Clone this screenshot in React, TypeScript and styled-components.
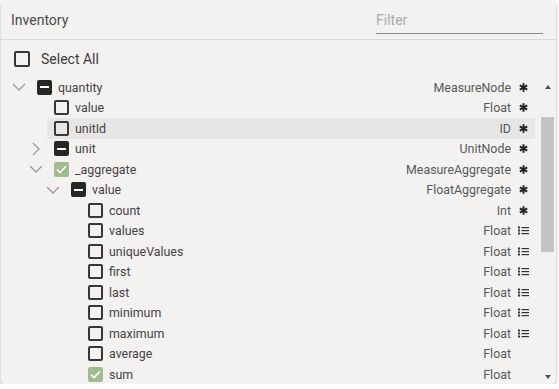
import React, { FC } from 'react';
import styled, { createGlobalStyle } from 'styled-components';

const GlobalStyle = createGlobalStyle`
  html, body {
    margin: 0;
    padding: 0;
    background: #ffffff;
    font-family: Roboto, "Noto Sans", sans-serif;
  }
`;

const Panel = styled.div`
  margin: 1px 0 0 1px;
  width: 555px;
  height: 383px;
  background: #f3f2f1;
  border-radius: 4px;
  box-shadow: 0 1px 3px rgba(0, 0, 0, 0.35);
  display: flex;
  flex-direction: column;
  overflow: hidden;
`;

const Header = styled.div`
  height: 38px;
  flex: none;
  display: flex;
  align-items: center;
  justify-content: space-between;
  padding: 0 13px 0 10px;
  border-bottom: 1px solid #d9d8d7;
`;

const Title = styled.div`
  font-size: 14px;
  color: #4a4a4a;
`;

const FilterInput = styled.input`
  align-self: flex-end;
  margin-bottom: 5px;
  width: 167px;
  height: 24px;
  box-sizing: border-box;
  padding: 0 0 3px 0;
  border: none;
  border-bottom: 1px solid #8c8c8c;
  background: transparent;
  font-family: Roboto, sans-serif;
  font-size: 14px;
  color: #333;
  outline: none;

  &::placeholder {
    color: #ababab;
  }
`;

const SelectAllRow = styled.label`
  height: 37px;
  flex: none;
  display: flex;
  align-items: center;
  gap: 11px;
  padding-left: 13px;
  font-size: 14px;
  color: #3c3c3c;
`;

const Body = styled.div`
  flex: 1;
  min-height: 0;
  display: flex;
`;

const TreeList = styled.div`
  flex: 1;
  overflow: hidden;
  padding-right: 4px;
`;

const Row = styled.div<{ $level: number }>`
  height: 20.5px;
  display: flex;
  align-items: center;
  padding-left: ${(p) => 7 + p.$level * 17}px;
`;

const Toggle = styled.div`
  width: 22px;
  height: 20px;
  flex: none;
  display: flex;
  align-items: center;
  justify-content: center;
`;

const Node = styled.div<{ $active?: boolean }>`
  flex: 1;
  height: 100%;
  display: flex;
  align-items: center;
  padding: 0 6px 0 7px;
  background: ${(p) => (p.$active ? '#e7e6e5' : 'transparent')};
`;

const Box = styled.span<{ $state: 'off' | 'on' | 'mixed'; $size?: number }>`
  width: ${(p) => p.$size ?? 15}px;
  height: ${(p) => p.$size ?? 15}px;
  box-sizing: border-box;
  flex: none;
  border-radius: 2px;
  display: flex;
  align-items: center;
  justify-content: center;
  border: 2px solid
    ${(p) => (p.$state === 'off' ? '#383838' : p.$state === 'on' ? '#9fbc8c' : '#262626')};
  background: ${(p) =>
    p.$state === 'off' ? 'transparent' : p.$state === 'on' ? '#9fbc8c' : '#262626'};
`;

const Label = styled.span`
  margin-left: 6px;
  font-size: 12.4px;
  color: #444;
  white-space: nowrap;
`;

const TypeName = styled.span`
  margin-left: auto;
  font-size: 12.4px;
  color: #595959;
  white-space: nowrap;
`;

const IconSlot = styled.span`
  width: 12px;
  margin-left: 6px;
  flex: none;
  display: flex;
  align-items: center;
  justify-content: center;
`;

const ScrollBar = styled.div`
  width: 17px;
  flex: none;
  display: flex;
  flex-direction: column;
  align-items: center;
`;

const Arrow = styled.div<{ $dir: 'up' | 'down' }>`
  height: 17px;
  flex: none;
  display: flex;
  align-items: center;
  justify-content: center;

  &::after {
    content: '';
    border-left: 3.5px solid transparent;
    border-right: 3.5px solid transparent;
    ${(p) =>
      p.$dir === 'up'
        ? 'border-bottom: 4px solid #505050; margin-top: 3px;'
        : 'border-top: 4px solid #505050; margin-top: 3px;'}
  }
`;

const Track = styled.div`
  flex: 1;
  width: 100%;
  display: flex;
  justify-content: center;
`;

const Thumb = styled.div`
  margin-top: 23px;
  width: 13px;
  height: 135px;
  background: #c3c3c3;
`;

type CheckState = 'off' | 'on' | 'mixed';

type TreeItem = {
  name: string;
  type: string;
  level: number;
  check: CheckState;
  toggle?: 'open' | 'closed';
  icon?: 'required' | 'list';
  active?: boolean;
};

const items: TreeItem[] = [
  { name: 'quantity', type: 'MeasureNode', level: 0, check: 'mixed', toggle: 'open', icon: 'required' },
  { name: 'value', type: 'Float', level: 1, check: 'off', icon: 'required' },
  { name: 'unitId', type: 'ID', level: 1, check: 'off', icon: 'required', active: true },
  { name: 'unit', type: 'UnitNode', level: 1, check: 'mixed', toggle: 'closed', icon: 'required' },
  { name: '_aggregate', type: 'MeasureAggregate', level: 1, check: 'on', toggle: 'open', icon: 'required' },
  { name: 'value', type: 'FloatAggregate', level: 2, check: 'mixed', toggle: 'open', icon: 'required' },
  { name: 'count', type: 'Int', level: 3, check: 'off', icon: 'required' },
  { name: 'values', type: 'Float', level: 3, check: 'off', icon: 'list' },
  { name: 'uniqueValues', type: 'Float', level: 3, check: 'off', icon: 'list' },
  { name: 'first', type: 'Float', level: 3, check: 'off', icon: 'list' },
  { name: 'last', type: 'Float', level: 3, check: 'off', icon: 'list' },
  { name: 'minimum', type: 'Float', level: 3, check: 'off', icon: 'list' },
  { name: 'maximum', type: 'Float', level: 3, check: 'off', icon: 'list' },
  { name: 'average', type: 'Float', level: 3, check: 'off' },
  { name: 'sum', type: 'Float', level: 3, check: 'on' },
];

const Chevron: FC<{ open: boolean }> = ({ open }) =>
  open ? (
    <svg width="14" height="8" viewBox="0 0 14 8">
      <path d="M1 1 L7 7 L13 1" fill="none" stroke="#9a9a9a" strokeWidth="1.3" />
    </svg>
  ) : (
    <svg width="8" height="14" viewBox="0 0 8 14">
      <path d="M1 1 L7 7 L1 13" fill="none" stroke="#9a9a9a" strokeWidth="1.3" />
    </svg>
  );

const RequiredIcon: FC = () => (
  <svg width="9" height="9" viewBox="0 0 10 10">
    <g stroke="#222" strokeWidth="2.2" strokeLinecap="butt">
      <line x1="5" y1="0.3" x2="5" y2="9.7" />
      <line x1="0.9" y1="2.65" x2="9.1" y2="7.35" />
      <line x1="0.9" y1="7.35" x2="9.1" y2="2.65" />
    </g>
  </svg>
);

const ListIcon: FC = () => (
  <svg width="11" height="9" viewBox="0 0 11 9">
    <g fill="#333">
      <rect x="0" y="0.5" width="2" height="2" />
      <rect x="0" y="3.5" width="2" height="2" />
      <rect x="0" y="6.5" width="2" height="2" />
      <rect x="3.5" y="1" width="7.5" height="1.2" />
      <rect x="3.5" y="4" width="7.5" height="1.2" />
      <rect x="3.5" y="7" width="7.5" height="1.2" />
    </g>
  </svg>
);

const CheckMark: FC = () => (
  <svg width="11" height="9" viewBox="0 0 11 9">
    <path d="M1 4.5 L4 7.5 L10 1.2" fill="none" stroke="#fff" strokeWidth="1.6" />
  </svg>
);

const DashMark: FC = () => (
  <svg width="9" height="2" viewBox="0 0 9 2">
    <rect x="0" y="0" width="9" height="2" fill="#fff" />
  </svg>
);

const CheckBox: FC<{ state: CheckState; size?: number }> = ({ state, size }) => (
  <Box $state={state} $size={size}>
    {state === 'on' && <CheckMark />}
    {state === 'mixed' && <DashMark />}
  </Box>
);

const TreeRow: FC<{ item: TreeItem }> = ({ item }) => (
  <Row $level={item.level}>
    <Toggle>{item.toggle && <Chevron open={item.toggle === 'open'} />}</Toggle>
    <Node $active={item.active}>
      <CheckBox state={item.check} />
      <Label>{item.name}</Label>
      <TypeName>{item.type}</TypeName>
      <IconSlot>
        {item.icon === 'required' && <RequiredIcon />}
        {item.icon === 'list' && <ListIcon />}
      </IconSlot>
    </Node>
  </Row>
);

const App: FC = () => {
  return (
    <>
      <GlobalStyle />
      <Panel>
        <Header>
          <Title>Inventory</Title>
          <FilterInput placeholder="Filter" />
        </Header>
        <SelectAllRow>
          <CheckBox state="off" size={16} />
          Select All
        </SelectAllRow>
        <Body>
          <TreeList>
            {items.map((item, index) => (
              <TreeRow key={index} item={item} />
            ))}
          </TreeList>
          <ScrollBar>
            <Arrow $dir="up" />
            <Track>
              <Thumb />
            </Track>
            <Arrow $dir="down" />
          </ScrollBar>
        </Body>
      </Panel>
    </>
  );
};

export default App;
